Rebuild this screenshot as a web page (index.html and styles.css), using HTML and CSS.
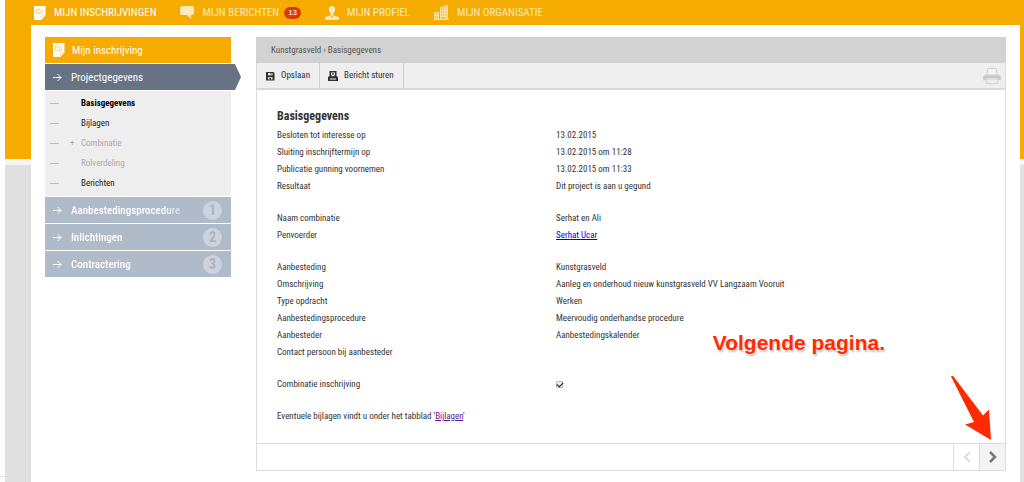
FILE: index.html
```html
<!DOCTYPE html>
<html lang="nl">
<head>
<meta charset="utf-8">
<title>Mijn inschrijvingen</title>
<meta name="viewport" content="width=device-width, initial-scale=1">
<link rel="stylesheet" href="styles.css">
</head>
<body>
<svg class="defs" aria-hidden="true">
  <symbol id="doc" viewBox="0 0 12 14"><path fill="currentColor" d="M0 0h11.500v9.500L7.500 14H0z"/><path fill="none" stroke="#f5ab00" stroke-opacity=".5" stroke-width=".8" d="M7.500 13.500V9.800h4M2.500 7.500V3l2 1.500V2.500l2 2L8.500 4v3.500zM4 6h3"/></symbol>
  <symbol id="go" viewBox="0 0 9 9"><path fill="none" stroke="currentColor" stroke-width="1" d="M0 4.500h8M4.500 1l3.500 3.500L4.500 8"/></symbol>
</svg>
<div class="page">
  <nav class="topnav">
    <a class="topnav-item current" href="#"><svg class="icon-doc"><use href="#doc"/></svg>MIJN INSCHRIJVINGEN</a>
    <a class="topnav-item" href="#"><svg class="icon-talk" viewBox="0 0 14 13"><path fill="currentColor" d="M2 0h10a2 2 0 0 1 2 2v5a2 2 0 0 1-2 2h-1v4L7 9H2a2 2 0 0 1-2-2V2a2 2 0 0 1 2-2z"/></svg>MIJN BERICHTEN<span class="badge">13</span></a>
    <a class="topnav-item" href="#"><svg class="icon-user" viewBox="0 0 14 14"><path fill="currentColor" d="M7 0c2.200 0 3.300 1.500 3.200 3.500C10.100 5.500 9 6.500 8.500 7.500v1.800L7 10.800 5.500 9.300V7.500C5 6.500 3.900 5.500 3.800 3.500 3.700 1.500 4.800 0 7 0zM4.800 9.600L7 12l2.200-2.400 3.300 1c1 .4 1.500 1.100 1.500 3.400H0c0-2.300.5-3 1.500-3.400z"/></svg>MIJN PROFIEL</a>
    <a class="topnav-item" href="#"><svg class="icon-org" viewBox="0 0 15 15"><path fill="currentColor" fill-opacity=".35" d="M0 7h5v8H0zM6 2.500L13.500 0v15H6z"/><path fill="none" stroke="currentColor" stroke-width=".8" d="M.5 14.500V7.500h4v7M6.500 14.500v-12l7-2v14M0 14.500h15M2.500 9v5M8.500 3v9M10.500 2.500v10M12 2v12M7 5.500h6M7 8.500h6M7 11.500h6M1 10.500h3"/></svg>MIJN ORGANISATIE</a>
  </nav>
  <div class="sheet">
    <nav class="side">
      <a class="side-item home" href="#"><svg class="icon-doc"><use href="#doc"/></svg>Mijn inschrijving</a>
      <a class="side-item open" href="#"><svg class="icon-go"><use href="#go"/></svg>Projectgegevens</a>
      <ul class="sub">
        <li><a class="active" href="#">Basisgegevens</a></li>
        <li><a href="#">Bijlagen</a></li>
        <li class="off"><span class="plus">+</span><a href="#">Combinatie</a></li>
        <li class="off"><a href="#">Rolverdeling</a></li>
        <li><a href="#">Berichten</a></li>
      </ul>
      <a class="side-item step" href="#"><svg class="icon-go"><use href="#go"/></svg><span class="step-name">Aanbestedingsprocedure</span><span class="num">1</span></a>
      <a class="side-item step" href="#"><svg class="icon-go"><use href="#go"/></svg><span class="step-name">Inlichtingen</span><span class="num">2</span></a>
      <a class="side-item step" href="#"><svg class="icon-go"><use href="#go"/></svg><span class="step-name">Contractering</span><span class="num">3</span></a>
    </nav>
    <main class="panel">
      <div class="crumbs">Kunstgrasveld › Basisgegevens</div>
      <div class="tools">
        <button class="tool" type="button"><svg class="icon-tool" viewBox="0 0 10 10"><path fill="currentColor" fill-rule="evenodd" d="M1 1h7.500l1 1V9.500H1zM3 2v2.200h4.500V2zM3 6.200v2.300h4.500V6.200z"/><path fill="currentColor" d="M5.500 2h1v1.500h-1zM4.500 7h1.500v2H4.500z"/></svg>Opslaan</button>
        <button class="tool" type="button"><svg class="icon-tool" viewBox="0 0 10 10"><path fill="currentColor" fill-rule="evenodd" d="M1.500 0h7v5L10 6v4H0V6l1.500-1zM3 1.500V4l2 1.500L7 4V1.500zM2 7.500v1h6v-1z"/><path fill="currentColor" d="M4 2.200h2v1.300H4z"/></svg>Bericht sturen</button>
        <button class="print" type="button" aria-label="Afdrukken"><svg class="icon-print" viewBox="0 0 18 16"><path fill="#f4f4f4" stroke="#cfcfcf" d="M4 7L5 .5h8l1 6.500"/><path fill="#cfcfcf" d="M2 6.500h14l2 2v4h-3L13.500 10h-9L3 12.500H0v-4z"/><path fill="#f0f0f0" stroke="#d4d4d4" d="M4.500 11h9l1.500 4.500H3z"/><path stroke="#bcbcbc" d="M2 9h14"/></svg></button>
      </div>
      <section class="body">
        <h1>Basisgegevens</h1>
        <dl>
          <dt>Besloten tot interesse op</dt><dd>13.02.2015</dd>
          <dt>Sluiting inschrijftermijn op</dt><dd>13.02.2015 om 11:28</dd>
          <dt>Publicatie gunning voornemen</dt><dd>13.02.2015 om 11:33</dd>
          <dt>Resultaat</dt><dd>Dit project is aan u gegund</dd>
        </dl>
        <dl>
          <dt>Naam combinatie</dt><dd>Serhat en Ali</dd>
          <dt>Penvoerder</dt><dd><a class="link" href="#">Serhat Ucar</a></dd>
        </dl>
        <dl>
          <dt>Aanbesteding</dt><dd>Kunstgrasveld</dd>
          <dt>Omschrijving</dt><dd>Aanleg en onderhoud nieuw kunstgrasveld VV Langzaam Vooruit</dd>
          <dt>Type opdracht</dt><dd>Werken</dd>
          <dt>Aanbestedingsprocedure</dt><dd>Meervoudig onderhandse procedure</dd>
          <dt>Aanbesteder</dt><dd>Aanbestedingskalender</dd>
          <dt>Contact persoon bij aanbesteder</dt><dd></dd>
        </dl>
        <div class="check-row"><label for="combi">Combinatie inschrijving</label><input id="combi" type="checkbox" checked></div>
        <p>Eventuele bijlagen vindt u onder het tabblad '<a class="link visited" href="#">Bijlagen</a>'</p>
      </section>
      <div class="pager">
        <button type="button" class="prev" aria-label="Vorige pagina" disabled><svg class="icon-page" viewBox="0 0 8 12"><path fill="none" stroke="currentColor" stroke-width="2" d="M7 1L2 6l5 5"/></svg></button>
        <button type="button" class="next" aria-label="Volgende pagina"><svg class="icon-page" viewBox="0 0 8 12"><path fill="none" stroke="currentColor" stroke-width="2.500" d="M1 1l5 5-5 5"/></svg></button>
      </div>
      <div class="hint">Volgende pagina.</div>
      <svg class="hint-arrow" viewBox="0 0 42 66"><path fill="#ff2a00" d="M1 1.500Q2 0 3.500 1.500L33 40.500l6-6 2 30.500L15 49.500l9-2.500Z"/></svg>
    </main>
  </div>
</div>
</body>
</html>
```
FILE: styles.css
```css
* { box-sizing: border-box; }
body {
  margin: 0;
  background: #fff linear-gradient(#fbd9bb, #fbd9bb) left bottom 5px / 8px 1px no-repeat;
  color: #333;
  font: 9px/17px "Roboto Condensed", "Liberation Sans Narrow", "Liberation Sans", sans-serif;
}
.defs { position: absolute; width: 0; height: 0; }
a { color: inherit; text-decoration: none; }
button { font: inherit; color: inherit; border: 0; background: none; padding: 0; }
svg { flex: none; }
.page {
  min-height: 100vh;
  margin-left: 5px;
  padding: 0 4px 0 26px;
  display: flex;
  flex-direction: column;
  background: linear-gradient(#f5ab00 159px, #f4f4f4 159px, #f4f4f4 165px, #e0e0e0 165px);
}
.topnav {
  display: flex;
  height: 25px;
  align-items: center;
  font-size: 11px;
  color: #ffe9b8;
}
.topnav-item { display: flex; align-items: center; gap: 8px; margin-right: 24px; white-space: nowrap; }
.topnav-item.current { color: #fff; padding-left: 3px; }
.icon-doc { width: 12px; height: 14px; }
.icon-talk { width: 14px; height: 13px; }
.icon-user { width: 14px; height: 14px; }
.icon-org { width: 15px; height: 15px; }
.badge {
  margin-left: -3px;
  padding: 0 4px;
  border-radius: 6px;
  background: #d93a00;
  color: #fff;
  font: 8px/12px "Liberation Sans", sans-serif;
}
.sheet {
  flex: 1;
  display: flex;
  align-items: flex-start;
  gap: 25px;
  padding: 12px 14px 11px 14px;
  background: #fff;
}
.side { flex: none; width: 186px; display: flex; flex-direction: column; gap: 1px; }
.side-item {
  display: flex;
  align-items: center;
  height: 26px;
  padding: 0 9px 0 8px;
  gap: 7px;
  font-size: 11px;
  color: #fff;
}
.home { background: #f5ab00; }
.open { background: #677385; margin-right: -10px; clip-path: polygon(0 0, calc(100% - 6px) 0, 100% 50%, calc(100% - 6px) 100%, 0 100%); }
.step { background: #b0bbc9; font-weight: 500; }
.icon-go { width: 9px; height: 9px; margin-right: 2px; }
.step-name {
  flex: 1;
  min-width: 0;
  white-space: nowrap;
  -webkit-mask-image: linear-gradient(to right, #000 90px, rgba(0, 0, 0, .3) 115px);
  mask-image: linear-gradient(to right, #000 90px, rgba(0, 0, 0, .3) 115px);
}
.num {
  width: 19px;
  height: 19px;
  border-radius: 50%;
  background: #ccd3dc;
  color: #aab4c2;
  font-size: 14px;
  font-weight: bold;
  line-height: 19px;
  text-align: center;
}
.sub { list-style: none; margin: 0; padding: 2px 0 3px; background: #eee; color: #222; }
.sub li {
  display: grid;
  grid-template-columns: 9px 11px 11px;
  align-items: center;
  height: 20px;
  padding-left: 5px;
}
.sub li::before { content: ""; width: 9px; height: 1px; background: #bbb; }
.sub a { grid-column: 4; color: inherit; }
.sub .off { color: #aaa; }
.plus { grid-column: 3; }
.sub .active { font-weight: bold; color: #000; }
.panel { position: relative; flex: 1; min-width: 0; border: 1px solid #dcdcdc; border-top: 0; background: #fff; }
.crumbs { height: 26px; padding: 0 15px; margin: 0 -1px; line-height: 26px; background: #d2d2d2; color: #555; }
.tools { display: flex; height: 27px; background: #eee; border-bottom: 2px solid #d8d8d8; }
.tool { display: flex; align-items: center; gap: 6px; padding: 0 9px 0 8px; border-right: 1px solid #d0d0d0; }
.icon-tool { width: 10px; height: 10px; }
.print { margin-left: auto; padding-right: 4px; }
.icon-print { display: block; width: 18px; height: 16px; }
.body { padding: 16px 20px 18px; }
h1 { margin: 0 0 1px; font-size: 12px; line-height: 20px; }
dl { display: grid; grid-template-columns: 279px 1fr; grid-auto-rows: 17px; margin: 0 0 15px; }
dt { grid-column: 1; }
dd { margin: 0; }
.link { color: #00e; text-decoration: underline; }
.visited { color: #551a8b; }
.check-row { display: grid; grid-template-columns: 279px 1fr; align-items: center; margin-bottom: 15px; }
.check-row input {
  appearance: none;
  width: 7px;
  height: 7px;
  margin: 0;
  border: 1px solid #bbb;
  border-radius: 1px;
  background: #eee;
}
.check-row input:checked::before {
  content: "";
  display: block;
  width: 5px;
  height: 3px;
  border: solid #222;
  border-width: 0 0 1px 1px;
  transform: rotate(-45deg);
}
p { margin: 0; }
.pager { display: flex; justify-content: flex-end; height: 27px; border-top: 1px solid #dcdcdc; }
.pager button { width: 26px; border-left: 1px solid #dcdcdc; color: #ddd; }
.pager .next { background: #f4f4f4; color: #777; }
.icon-page { width: 8px; height: 12px; display: block; margin: auto; }
.hint {
  position: absolute;
  right: 120px;
  bottom: 114px;
  color: #ff2a00;
  font: bold 21px/26px "Liberation Sans", sans-serif;
  text-shadow: 0 0 2px #fff, 1px 2px 2px #bbb;
}
.hint-arrow { position: absolute; right: 13px; bottom: 29px; width: 42px; height: 66px; }
```
